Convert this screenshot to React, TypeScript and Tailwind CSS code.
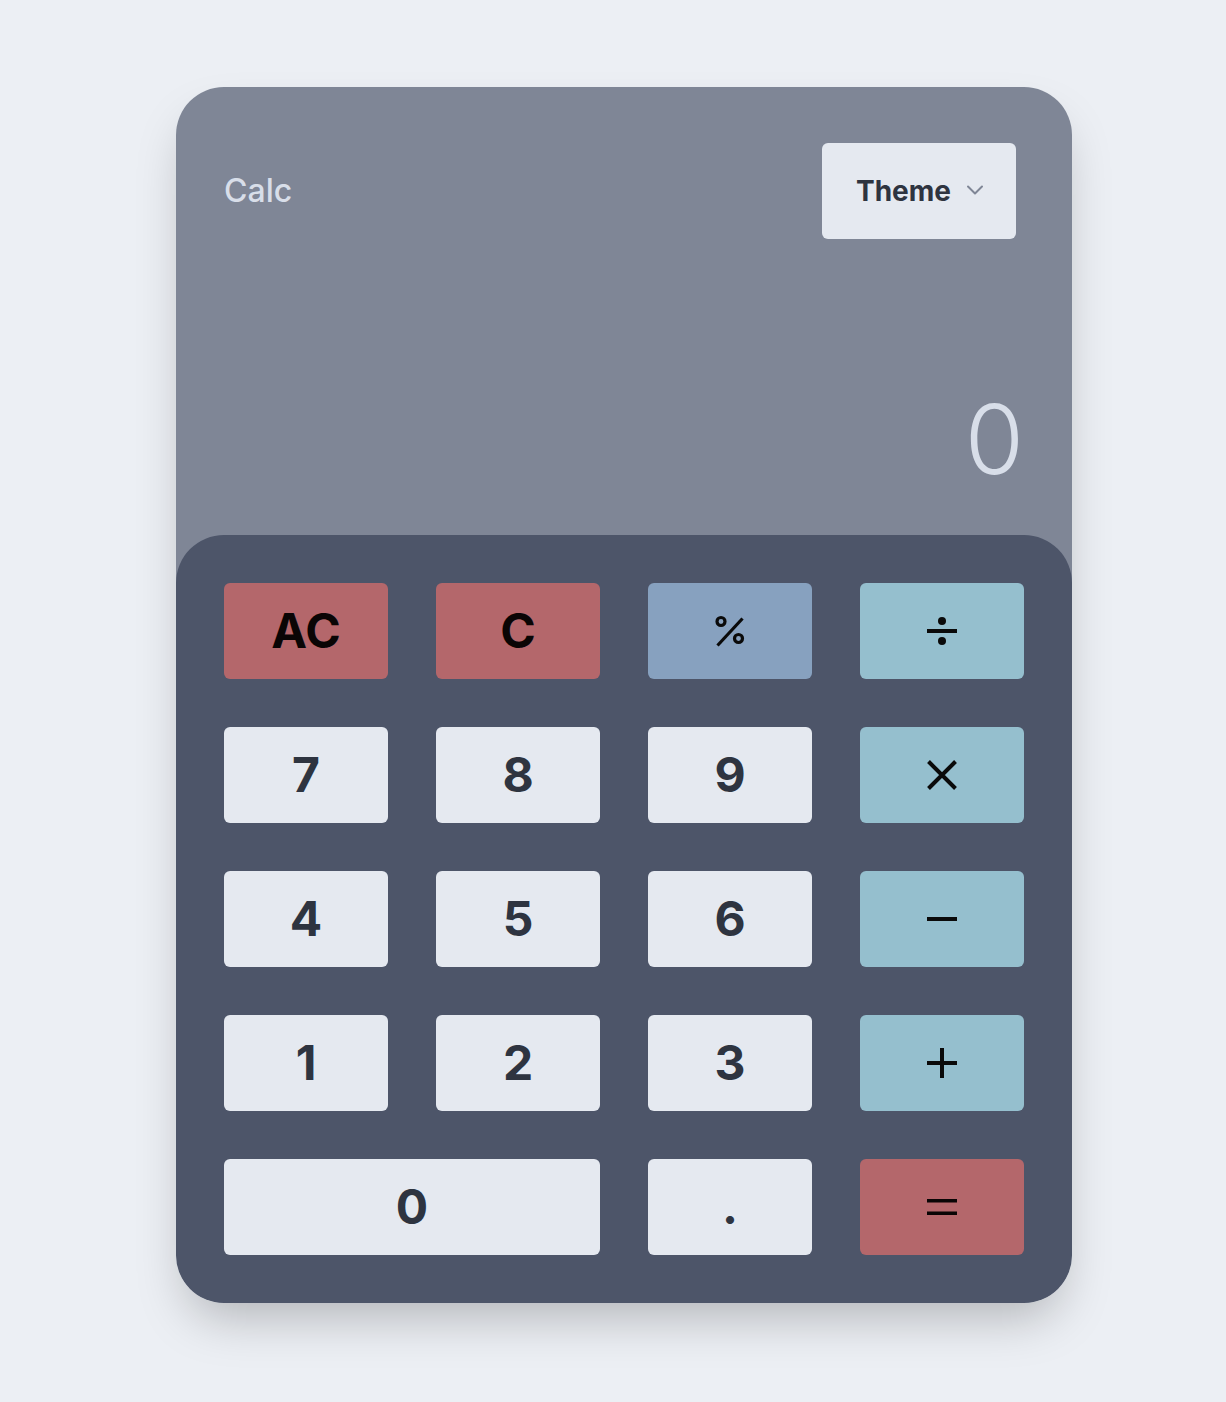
import { ChevronDown } from "lucide-react"
import type { ReactNode } from "react"

type Key = { id: string; label: ReactNode; kind: "danger" | "accent" | "op" | "digit"; wide?: boolean }

const Op = ({ children, h = 30 }: { children: ReactNode; h?: number }) => (
  <svg width="30" height={h} viewBox={`0 0 30 ${h}`} fill="none" stroke="currentColor" strokeWidth="4">
    {children}
  </svg>
)

const keys: Key[] = [
  { id: "ac", label: "AC", kind: "danger" },
  { id: "c", label: "C", kind: "danger" },
  {
    id: "pct",
    label: (
      <Op h={32}>
        <circle cx="6" cy="6.5" r="4" strokeWidth="3.2" />
        <circle cx="23.5" cy="23.5" r="4" strokeWidth="3.2" />
        <line x1="2.5" y1="30.5" x2="27.5" y2="3.5" strokeWidth="3.2" />
      </Op>
    ),
    kind: "accent",
  },
  {
    id: "div",
    label: (
      <Op>
        <line x1="0" y1="15" x2="30" y2="15" />
        <circle cx="15" cy="5" r="4" fill="currentColor" stroke="none" />
        <circle cx="15" cy="25" r="4" fill="currentColor" stroke="none" />
      </Op>
    ),
    kind: "op",
  },
  { id: "7", label: "7", kind: "digit" },
  { id: "8", label: "8", kind: "digit" },
  { id: "9", label: "9", kind: "digit" },
  {
    id: "mul",
    label: (
      <Op>
        <path d="M1.5 1.5 L28.5 28.5 M28.5 1.5 L1.5 28.5" strokeWidth="4" />
      </Op>
    ),
    kind: "op",
  },
  { id: "4", label: "4", kind: "digit" },
  { id: "5", label: "5", kind: "digit" },
  { id: "6", label: "6", kind: "digit" },
  {
    id: "sub",
    label: (
      <Op>
        <line x1="0" y1="15" x2="30" y2="15" />
      </Op>
    ),
    kind: "op",
  },
  { id: "1", label: "1", kind: "digit" },
  { id: "2", label: "2", kind: "digit" },
  { id: "3", label: "3", kind: "digit" },
  {
    id: "add",
    label: (
      <Op>
        <line x1="0" y1="15" x2="30" y2="15" />
        <line x1="15" y1="0" x2="15" y2="30" />
      </Op>
    ),
    kind: "op",
  },
  { id: "0", label: "0", kind: "digit", wide: true },
  { id: "dot", label: ".", kind: "digit" },
  {
    id: "eq",
    label: (
      <Op>
        <line x1="0" y1="8.75" x2="30" y2="8.75" strokeWidth="3.5" />
        <line x1="0" y1="21.25" x2="30" y2="21.25" strokeWidth="3.5" />
      </Op>
    ),
    kind: "danger",
  },
]

const kindClass: Record<Key["kind"], string> = {
  danger: "bg-[#b4676b] text-[#0a0505] font-bold",
  accent: "bg-[#87a1bf] text-[#0a0a0a] font-bold",
  op: "bg-[#95bfce] text-[#0a0a0a] font-normal",
  digit: "bg-[#e5e9f0] text-[#2e3440] font-bold",
}

export default function App() {
  return (
    <div className="min-h-[1402px] bg-[#eceff4] pt-[87px] pl-[176px] font-['Inter',sans-serif]">
      <div className="w-[896px] rounded-[48px] bg-[#7f8696] shadow-2xl overflow-hidden">
        <div className="flex items-center justify-between pt-14 pl-12 pr-14">
          <span className="text-[32px] font-medium text-[#d8dee9]">Calc</span>
          <button className="flex h-24 items-center gap-[10px] rounded-md bg-[#e5e9f0] pl-[34px] pr-[27px] text-[28px] font-bold text-[#2e3440]">
            Theme
            <ChevronDown size={28} className="text-[#7f8696] -mt-[3px]" strokeWidth={1.7} />
          </button>
        </div>

        <div className="flex h-[296px] items-end justify-end px-12 pb-12">
          <span className="text-8xl leading-none font-light text-[#d8dee9]">0</span>
        </div>

        <div className="grid grid-cols-4 gap-12 rounded-[48px] bg-[#4d5569] p-12">
          {keys.map((k) => (
            <button
              key={k.id}
              className={`flex h-24 items-center justify-center rounded-md text-5xl ${kindClass[k.kind]} ${k.wide ? "col-span-2" : ""}`}
            >
              {k.label}
            </button>
          ))}
        </div>
      </div>
    </div>
  )
}
